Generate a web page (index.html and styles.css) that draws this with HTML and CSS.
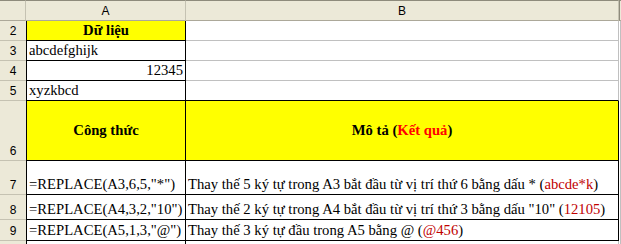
FILE: index.html
```html
<!DOCTYPE html>
<html lang="vi">
<head>
<meta charset="utf-8">
<title>REPLACE</title>
<link rel="stylesheet" href="styles.css">
</head>
<body>
<div class="sheet">
  <div class="hd corner"></div>
  <div class="hd colhd">A</div>
  <div class="hd colhd">B</div>
  <div class="hd colhd extra"></div>

  <div class="rh">2</div>
  <div class="c a yellow bold center">Dữ liệu</div>
  <div class="c b"></div>
  <div class="x"></div>

  <div class="rh">3</div>
  <div class="c a">abcdefghijk</div>
  <div class="c b"></div>
  <div class="x"></div>

  <div class="rh">4</div>
  <div class="c a right">12345</div>
  <div class="c b"></div>
  <div class="x"></div>

  <div class="rh">5</div>
  <div class="c a">xyzkbcd</div>
  <div class="c b last"></div>
  <div class="x"></div>

  <div class="rh">6</div>
  <div class="c a yellow bold center mid">Công thức</div>
  <div class="c b bk yellow bold center mid">Mô tả (<span class="red">Kết quả</span>)</div>
  <div class="x"></div>

  <div class="rh">7</div>
  <div class="c a">=REPLACE(A3,6,5,"*")</div>
  <div class="c b bk">Thay thế 5 ký tự trong A3 bắt đầu từ vị trí thứ 6 bằng dấu * (<span class="res">abcde*k</span>)</div>
  <div class="x"></div>

  <div class="rh">8</div>
  <div class="c a">=REPLACE(A4,3,2,"10")</div>
  <div class="c b bk">Thay thế 2 ký tự trong A4 bắt đầu từ vị trí thứ 3 bằng dấu "10" (<span class="res">12105</span>)</div>
  <div class="x"></div>

  <div class="rh">9</div>
  <div class="c a">=REPLACE(A5,1,3,"@")</div>
  <div class="c b bk">Thay thế 3 ký tự đầu trong A5 bằng @ (<span class="res">@456</span>)</div>
  <div class="x"></div>

  <div class="rh tail"></div>
  <div class="c a tail"></div>
  <div class="c b tail"></div>
  <div class="x tail"></div>
</div>
</body>
</html>
```

FILE: styles.css
```css
* { box-sizing: border-box; }
html, body { margin: 0; padding: 0; background: #ffffff; }
body { width: 621px; height: 244px; overflow: hidden; }

.sheet {
  display: grid;
  grid-template-columns: 26px 160px 433px 2px;
  grid-template-rows: 21px 20px 20px 20px 20px 60px 34px 25px 21px 3px;
  color: #000;
}

.c {
  font-family: "Liberation Serif", "DejaVu Serif", serif;
  font-size: 14.67px;
  display: flex;
  align-items: flex-end;
  padding: 0 2px 1px 2px;
  white-space: nowrap;
  overflow: hidden;
  background: #fff;
}

.hd {
  background: #ece9d8;
  border-top: 1px solid #8e8b7c;
  border-bottom: 1px solid #aca899;
  border-right: 1px solid #c5c2b2;
  font-family: "Liberation Sans", Arial, sans-serif;
  font-size: 12px;
  display: flex;
  align-items: center;
  justify-content: center;
}
.hd.extra { border-right: none; border-left: 1px solid #8e8b7c; }

.rh {
  background: #ece9d8;
  border-bottom: 1px solid #c5c2b2;
  font-family: "Liberation Sans", Arial, sans-serif;
  font-size: 12px;
  display: flex;
  align-items: flex-end;
  justify-content: center;
  padding-bottom: 2px;
}
.rh.tail { border-bottom: none; }

.c.a {
  border-left: 1px solid #000;
  border-right: 1px solid #000;
  border-bottom: 1px solid #000;
}
.c.b {
  border-right: 1px solid #c0c0c0;
  border-bottom: 1px solid #c0c0c0;
}
.c.b.last { border-bottom: 1px solid #000; }
.c.b.bk {
  border-right: 1px solid #000;
  border-bottom: 1px solid #000;
}
.c.tail { border-bottom: none; }
.c.a.tail { border-left: 1px solid #000; border-right: 1px solid #000; }
.c.b.tail { border-right: 1px solid #c0c0c0; }

.x { background: #fff; border-right: 1px solid #c0c0c0; }

.yellow { background: #ffff00; }
.bold { font-weight: bold; }
.center { justify-content: center; }
.right { justify-content: flex-end; }
.mid { align-items: center; }

.red { color: #ff0000; }
.res { color: #c00000; }
```
